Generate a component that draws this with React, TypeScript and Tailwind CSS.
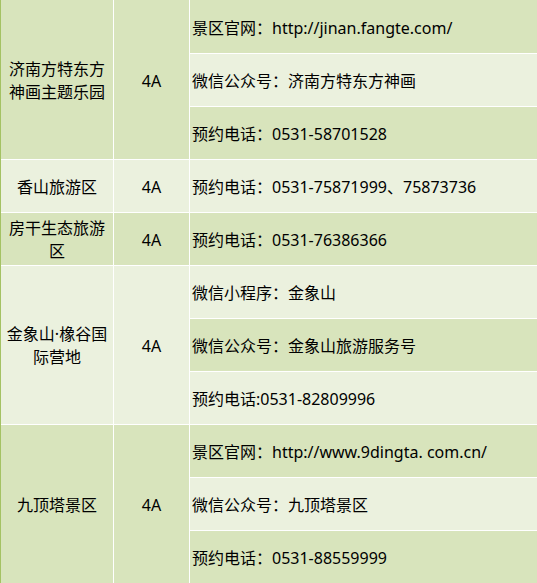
import React from "react";

const DARK = "bg-[#d8e4bc]";
const LIGHT = "bg-[#ebf1de]";

type Group = { name: React.ReactNode; lines: string[]; start: number };

const groups: Group[] = [
  {
    name: (
      <>
        济南方特东方
        <br />
        神画主题乐园
      </>
    ),
    lines: ["景区官网：http://jinan.fangte.com/", "微信公众号：济南方特东方神画", "预约电话：0531-58701528"],
    start: 0,
  },
  { name: "香山旅游区", lines: ["预约电话：0531-75871999、75873736"], start: 3 },
  {
    name: (
      <>
        房干生态旅游
        <br />区
      </>
    ),
    lines: ["预约电话：0531-76386366"],
    start: 4,
  },
  {
    name: (
      <>
        金象山·橡谷国
        <br />
        际营地
      </>
    ),
    lines: ["微信小程序：金象山", "微信公众号：金象山旅游服务号", "预约电话:0531-82809996"],
    start: 5,
  },
  {
    name: "九顶塔景区",
    lines: ["景区官网：http://www.9dingta. com.cn/", "微信公众号：九顶塔景区", "预约电话：0531-88559999"],
    start: 8,
  },
];

const rowStart = [
  "row-start-1",
  "row-start-2",
  "row-start-3",
  "row-start-4",
  "row-start-5",
  "row-start-6",
  "row-start-7",
  "row-start-8",
  "row-start-9",
  "row-start-10",
  "row-start-11",
];
const rowSpan = ["row-span-1", "row-span-1", "row-span-2", "row-span-3"];

export default function App() {
  return (
    <div
      className="w-[537px] h-[583px] overflow-hidden bg-white text-[16px] text-black"
      style={{ fontFamily: '"Noto Sans", "Noto Sans CJK SC", sans-serif' }}
    >
      <div className="grid grid-cols-[112px_75px_1fr] grid-rows-[53px_repeat(10,52px)] gap-px bg-white border-l border-[#a4c263]">
        {groups.map((g) => {
          const bg = g.start % 2 === 0 ? DARK : LIGHT;
          const n = g.lines.length;
          return (
            <React.Fragment key={g.start}>
              <div
                className={`col-start-1 ${rowStart[g.start]} ${rowSpan[n]} ${bg} flex items-center justify-center text-center leading-[23px] pt-[2px]`}
              >
                <span>{g.name}</span>
              </div>
              <div
                className={`col-start-2 ${rowStart[g.start]} ${rowSpan[n]} ${bg} flex items-center justify-center pt-[2px]`}
              >
                4A
              </div>
              {g.lines.map((l, i) => {
                const r = g.start + i;
                return (
                  <div
                    key={i}
                    className={`col-start-3 ${rowStart[r]} ${r % 2 === 0 ? DARK : LIGHT} flex items-center pl-[2px] pt-[2px] whitespace-nowrap`}
                  >
                    {l}
                  </div>
                );
              })}
            </React.Fragment>
          );
        })}
      </div>
    </div>
  );
}
